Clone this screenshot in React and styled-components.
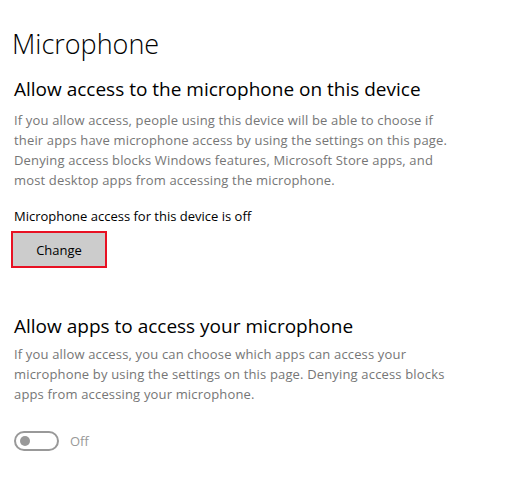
import React from "react";
import styled, { createGlobalStyle } from "styled-components";

const Global = createGlobalStyle`
body {
  margin: 0;
  background: #fff;
  font-family: "Open Sans", "Noto Sans", sans-serif;
}
`

const Page = styled.div`
width: 525px;
height: 491px;
padding: 0 14px;
box-sizing: border-box;
display: flex;
flex-direction: column;
`
const Title = styled.h1`
margin: 26px 0 0 -2px;
font-size: 27px;
font-weight: 300;
line-height: 36px;
color: #000;
`
const Heading = styled.h2`
margin: ${p => p.top}px 0 0 0;
font-size: 19px;
font-weight: 400;
line-height: 26px;
color: #000;
`
const Body = styled.p`
margin: ${p => p.top}px 0 0 0;
font-size: 13px;
letter-spacing: 0.16px;
line-height: 20px;
color: #767676;
white-space: nowrap;
`
const Status = styled.div`
margin-top: 16px;
font-size: 13px;
line-height: 20px;
color: #000;
`
const Button = styled.button`
margin: 5px 0 0 -3px;
width: 96px;
height: 37px;
box-sizing: border-box;
border: 2px solid #e81123;
background: #cccccc;
font-family: inherit;
font-size: 13px;
color: #000;
align-self: flex-start;
`
const ToggleRow = styled.div`
margin-top: 27px;
display: flex;
align-items: center;
gap: 11px;
`
const Track = styled.div`
width: 45px;
height: 20px;
box-sizing: border-box;
border: 2px solid #999;
border-radius: 10px;
display: flex;
align-items: center;
padding-left: 4px;
`
const Knob = styled.div`
width: 10px;
height: 10px;
border-radius: 50%;
background: #999;
`
const ToggleLabel = styled.span`
font-size: 13px;
color: #999;
`

export default function App() {
  return (
    <Page>
      <Global />
      <Title>Microphone</Title>
      <Heading top={14}>Allow access to the microphone on this device</Heading>
      <Body top={8}>
        If you allow access, people using this device will be able to choose if<br />
        their apps have microphone access by using the settings on this page.<br />
        Denying access blocks Windows features, Microsoft Store apps, and<br />
        most desktop apps from accessing the microphone.
      </Body>
      <Status>Microphone access for this device is off</Status>
      <Button>Change</Button>
      <Heading top={45}>Allow apps to access your microphone</Heading>
      <Body top={5}>
        If you allow access, you can choose which apps can access your<br />
        microphone by using the settings on this page. Denying access blocks<br />
        apps from accessing your microphone.
      </Body>
      <ToggleRow>
        <Track><Knob /></Track>
        <ToggleLabel>Off</ToggleLabel>
      </ToggleRow>
    </Page>
  );
}
